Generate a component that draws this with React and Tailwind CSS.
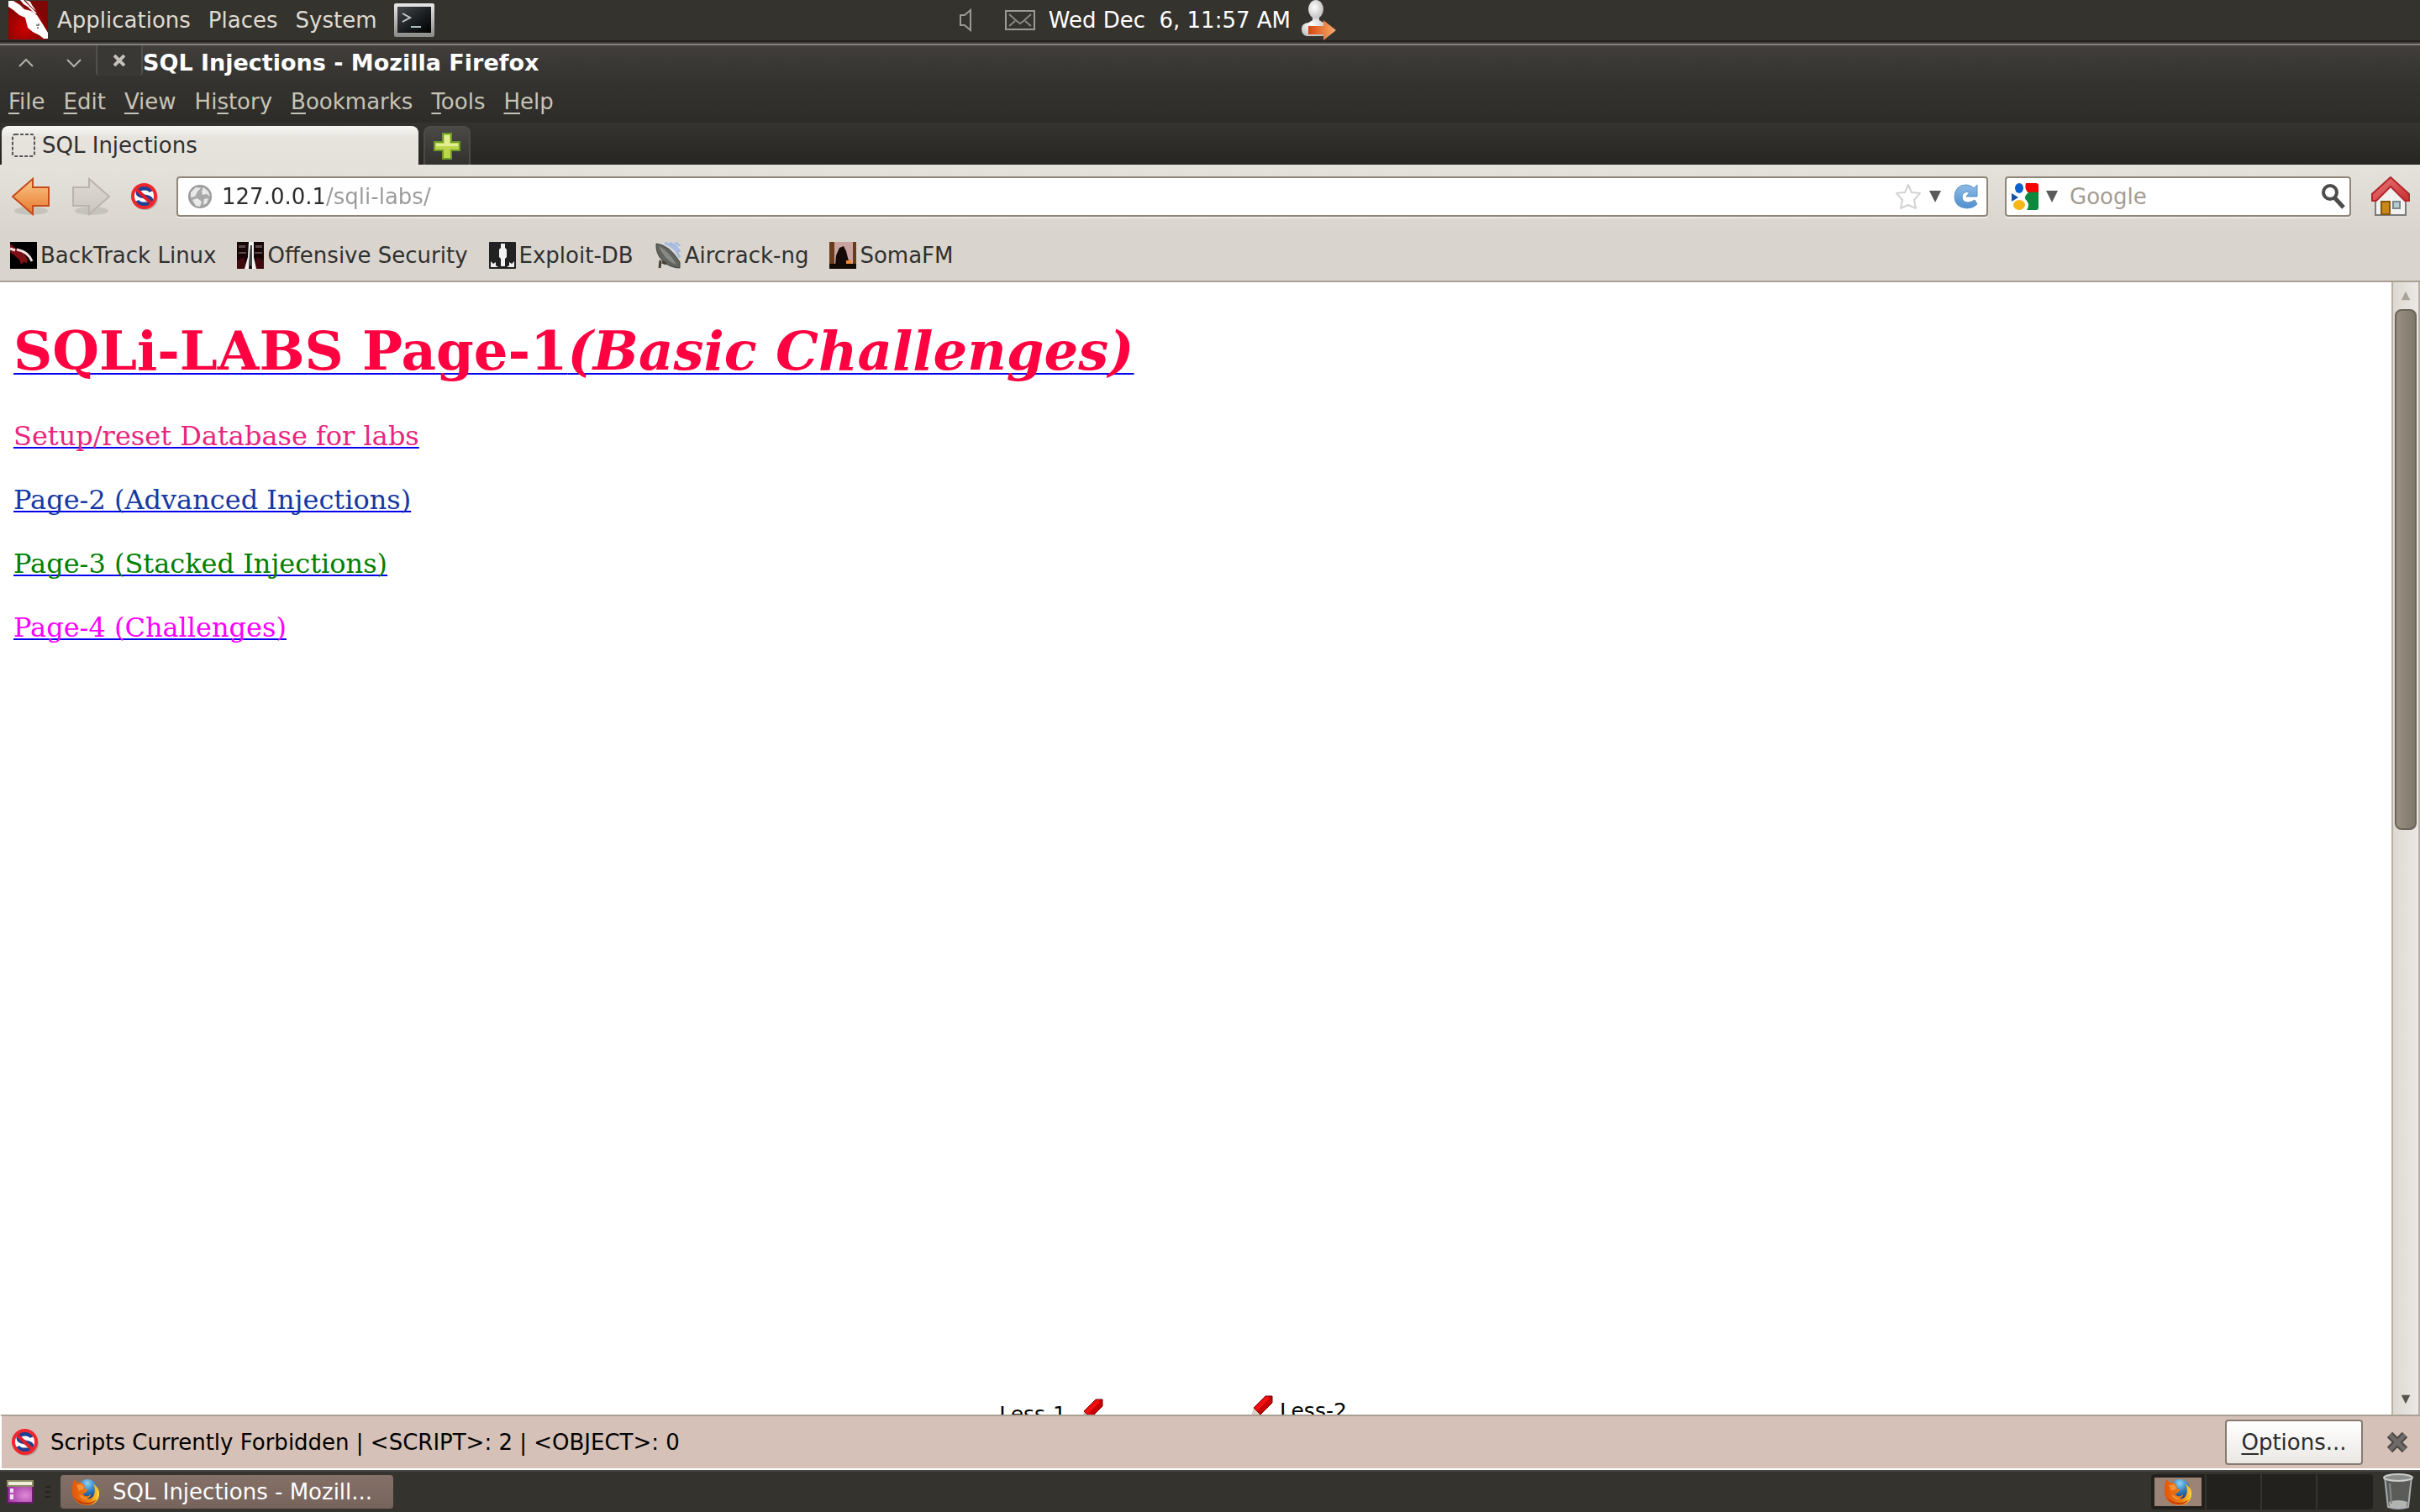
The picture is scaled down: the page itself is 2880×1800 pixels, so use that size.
import React from "react";

function DragonLogo() {
  return (
    <svg viewBox="0 0 48 48" className="h-12 w-12 shrink-0" aria-hidden="true">
      <defs>
        <radialGradient id="dragonRed" cx="0.4" cy="0.7" r="0.6">
          <stop offset="0" stopColor="#cc0000" />
          <stop offset="1" stopColor="#800505" />
        </radialGradient>
      </defs>
      <rect x="0" y="1" width="47" height="46" fill="url(#dragonRed)" />
      <path d="M0 1h6l8 5 5 5 8 2 7 5 7 11 6 10 0 7-5 0-5-4-8-4-6-5-2-8-1-4-7-3-7-6-6-4z" fill="#fff" />
      <path d="M14 0h4l5 5 11 11-3 0-8-8-5-3zM20 0l6 2 2 4 5 7-4-3z" fill="#fff" />
      <path d="M33 30h3M36 28v3M34 33h2" stroke="#888" strokeWidth="2" />
    </svg>
  );
}

function TerminalIcon() {
  return (
    <svg viewBox="0 0 48 40" className="h-10 w-12 shrink-0" aria-hidden="true">
      <defs>
        <linearGradient id="termBody" x1="0" y1="0" x2="1" y2="1">
          <stop offset="0" stopColor="#45494b" />
          <stop offset="0.55" stopColor="#1a1e20" />
          <stop offset="1" stopColor="#000" />
        </linearGradient>
        <linearGradient id="termRim" x1="0" y1="0" x2="0" y2="1">
          <stop offset="0" stopColor="#e8e8e8" />
          <stop offset="1" stopColor="#8a8a88" />
        </linearGradient>
      </defs>
      <rect x="0" y="0" width="48" height="40" rx="2" fill="url(#termRim)" />
      <rect x="4" y="4" width="40" height="31" fill="url(#termBody)" />
      <path d="M10 12l9 5-9 5" fill="none" stroke="#c5cbcc" strokeWidth="2" />
      <path d="M20 28h12" stroke="#aebfc6" strokeWidth="2" />
    </svg>
  );
}

function UserIcon() {
  return (
    <svg viewBox="0 0 44 48" className="h-12 w-11 shrink-0" aria-hidden="true">
      <defs>
        <radialGradient id="userHead" cx="0.4" cy="0.4" r="0.7">
          <stop offset="0" stopColor="#fff" />
          <stop offset="1" stopColor="#b9b9b9" />
        </radialGradient>
        <linearGradient id="userArrow" x1="0" x2="1">
          <stop offset="0" stopColor="#d8450d" />
          <stop offset="1" stopColor="#f8b070" />
        </linearGradient>
      </defs>
      <path d="M1 34q0-6 8-7l5-3v-4h8v4l5 3q4 1 4 7v5q0 4-5 4H7q-6-1-6-9z" fill="url(#userHead)" />
      <ellipse cx="18" cy="11" rx="9" ry="11" fill="url(#userHead)" />
      <path d="M9 31h18v-7l15 12-15 12v-7H9z" fill="url(#userArrow)" />
    </svg>
  );
}

function BlockedS({ className }) {
  return (
    <svg viewBox="0 0 32 32" className={className} aria-hidden="true">
      <ellipse cx="17" cy="18" rx="15" ry="14" fill="#000" opacity="0.18" />
      <circle cx="15.500" cy="15.500" r="13.500" fill="#fff" />
      <path d="M24 10q-2-4-8-4-8 0-8 5 0 4 8 5t8 5q0 4-8 4-7 0-9-4" fill="none" stroke="#1c4193" strokeWidth="5" />
      <path d="M6 7l19 18" stroke="#e11d2a" strokeWidth="4" />
      <circle cx="15.500" cy="15.500" r="13.500" fill="none" stroke="#f0272c" strokeWidth="4" />
    </svg>
  );
}

function FirefoxIcon() {
  return (
    <svg viewBox="0 0 32 32" className="h-8 w-8 shrink-0" aria-hidden="true">
      <defs>
        <radialGradient id="foxGlobe" cx="0.5" cy="0.2" r="0.8">
          <stop offset="0" stopColor="#8fd4f5" />
          <stop offset="0.5" stopColor="#2f7fc6" />
          <stop offset="1" stopColor="#123c7c" />
        </radialGradient>
        <linearGradient id="foxTail" x1="0" x2="1">
          <stop offset="0" stopColor="#e2560c" />
          <stop offset="0.65" stopColor="#ee8012" />
          <stop offset="1" stopColor="#ffd93b" />
        </linearGradient>
      </defs>
      <circle cx="18" cy="13" r="12" fill="url(#foxGlobe)" />
      <path d="M2 1l4 4 5 0 4 4-1 3 5 1-3 4-3 1q1 4 6 3l3-2q0 3-4 5 6 1 8-5t-1-13q8 6 7 14-2 12-15 12Q3 31 0 19V9z" fill="url(#foxTail)" />
      <path d="M5 8l6-1 3 3-1 3-5 2zM8 19q3 7 11 6" fill="#f9a24a" opacity="0.7" />
      <path d="M2 22q5 9 15 9 8 0 12-6-5 4-12 4Q8 28 2 22z" fill="#c33e08" />
    </svg>
  );
}

function NavArrow({ forward }) {
  const id = forward ? "navForward" : "navBack";
  return (
    <svg viewBox="0 0 46 48" className="h-12 w-[46px]" aria-hidden="true">
      <defs>
        <linearGradient id={id} x1="0" y1="0" x2="0" y2="1">
          <stop offset="0" stopColor={forward ? "#dedad5" : "#f9c98a"} />
          <stop offset="1" stopColor={forward ? "#cbc5bf" : "#e8772c"} />
        </linearGradient>
      </defs>
      <ellipse cx="23" cy="41" rx="20" ry="5" fill="#000" opacity="0.1" />
      <path
        d={forward ? "M1 13h19V3l24 21-24 21V35H1z" : "M44 13H25V3L1 24l24 21V35h19z"}
        fill={`url(#${id})`}
        stroke={forward ? "#bbb4ad" : "#c74a19"}
        strokeWidth="2"
      />
    </svg>
  );
}

function Globe() {
  return (
    <svg viewBox="0 0 28 28" className="h-7 w-7 shrink-0" aria-hidden="true">
      <circle cx="14" cy="14" r="13" fill="#a9a9a9" stroke="#9b9b9b" strokeWidth="2" />
      <path d="M3 9l6-6 6 1-4 4-3 6-5 1zM18 3l6 5 2 6-4-3-5 1-1-4zM5 18l6-2 5 4-2 6-5-1zM19 17l5-1-2 6-4 2z" fill="#e9e9e9" />
    </svg>
  );
}

function Star() {
  return (
    <svg viewBox="0 0 32 32" className="h-8 w-8" aria-hidden="true">
      <path d="M16 2l4 9 10 1-7 8 2 10-9-4-9 4 2-10-7-8 10-1z" fill="#fff" stroke="#d2d2d2" strokeWidth="2" strokeLinejoin="round" />
    </svg>
  );
}

function Triangle({ className = "h-4 w-4 text-[#5b5b5b]", up }) {
  return (
    <svg viewBox="0 0 16 16" className={className} aria-hidden="true">
      <path d={up ? "M1 15h14L8 1z" : "M1 1h14L8 15z"} fill="currentColor" />
    </svg>
  );
}

function Reload() {
  return (
    <svg viewBox="0 0 30 32" className="h-8 w-[30px]" aria-hidden="true">
      <defs>
        <linearGradient id="reloadBlue" x1="0" y1="0" x2="0" y2="1">
          <stop offset="0" stopColor="#8fbbe6" />
          <stop offset="1" stopColor="#4f8fce" />
        </linearGradient>
      </defs>
      <path d="M28 2v14H15l4-5q-8-2-9 5 0 7 7 7 4 0 8-3l3 5q-5 5-12 5Q1 29 1 16 2 2 15 2q5 0 9 4z" fill="url(#reloadBlue)" stroke="#5a93cb" />
    </svg>
  );
}

function GoogleIcon() {
  return (
    <svg viewBox="0 0 32 32" className="h-8 w-8" aria-hidden="true">
      <path d="M17 0h12q3 0 3 3v8H19q-4-5-2-11z" fill="#f80000" />
      <path d="M20 11q5-1 12 0v18q0 3-3 3H18q4-6 0-11-5-4 2-10z" fill="#08893e" />
      <ellipse cx="9" cy="6" rx="5" ry="6" fill="#0b62cf" />
      <path d="M0 12l8 5-8 5z" fill="#1b4fa8" />
      <ellipse cx="9" cy="26" rx="7" ry="6" fill="#f5b616" />
    </svg>
  );
}

function SearchIcon() {
  return (
    <svg viewBox="0 0 30 30" className="h-[30px] w-[30px]" aria-hidden="true">
      <circle cx="11" cy="10" r="8" fill="none" stroke="#4c4c4c" strokeWidth="4" />
      <path d="M16 16l11 12" stroke="#4c4c4c" strokeWidth="5" />
    </svg>
  );
}

function HomeIcon() {
  return (
    <svg viewBox="0 0 46 48" className="h-12 w-[46px]" aria-hidden="true">
      <defs>
        <linearGradient id="roof" x1="0" y1="0" x2="1" y2="1">
          <stop offset="0" stopColor="#ea7a78" />
          <stop offset="1" stopColor="#c72f33" />
        </linearGradient>
      </defs>
      <path d="M5 22L23 7l18 15v24H5z" fill="#f1f1f0" stroke="#7b7b7b" strokeWidth="2" />
      <path d="M23 1l22 20v8h-5L23 12 6 29H1v-8z" fill="url(#roof)" stroke="#b3282c" strokeWidth="2" />
      <path d="M12 30h10v15H12z" fill="#c98718" stroke="#875809" strokeWidth="2" />
      <path d="M26 30h8v8h-8z" fill="#b5cdd2" stroke="#7d8788" strokeWidth="2" />
    </svg>
  );
}

function BackTrackIcon() {
  return (
    <svg viewBox="0 0 32 32" className="h-8 w-8" aria-hidden="true">
      <rect width="32" height="32" fill="#000" />
      <path d="M0 2l6 5 4 2 6 4 5 8-1 4-4-1-3 3-2-6-5-4-6-5z" fill="#7d1015" />
      <path d="M0 8l6 2M8 9q14 3 18 14" fill="none" stroke="#f1dfe0" strokeWidth="3" />
    </svg>
  );
}

function OffSecIcon() {
  return (
    <svg viewBox="0 0 32 32" className="h-8 w-8" aria-hidden="true">
      <rect width="32" height="32" fill="#180506" />
      <path d="M2 4h8v3H2zM22 4h8v3h-8zM2 12h9v2H2zM21 12h9v2h-9z" fill="#5b4a4a" />
      <path d="M0 22l8-4 4 14H0zM32 22l-8-4-4 14h12z" fill="#3f0b0e" />
      <path d="M14 0h6v18l3 14h-5l-1-12h-2l-1 12H9l4-14z" fill="#f4f4f4" />
      <path d="M16 4h2v24h-4l1-14z" fill="#444" />
    </svg>
  );
}

function ExploitIcon() {
  return (
    <svg viewBox="0 0 32 32" className="h-8 w-8" aria-hidden="true">
      <rect width="32" height="32" rx="1" fill="#222" />
      <path d="M14 2h5v5l2 2v9l-2 2v9h-5v-9l-2-2V9l2-2z" fill="#f2f2f2" />
      <path d="M2 23l3 3 3-2v4l3 2H2zM30 23l-3 3-3-2v4l-3 2h9z" fill="#eee" />
    </svg>
  );
}

function AircrackIcon() {
  return (
    <svg viewBox="0 0 32 32" className="h-8 w-8" aria-hidden="true">
      <path d="M9 1h21v21Q24 8 9 1z" fill="#dfe3ec" />
      <path d="M12 1q14 5 18 18M18 1q9 4 12 11M24 1q4 1 6 4" fill="none" stroke="#a6badf" strokeWidth="3" />
      <path d="M2 2q16 2 28 22v7q-11 0-20-8Q1 14 2 2z" fill="#62655f" stroke="#3f413c" />
      <path d="M5 5q12 6 21 22-13-4-21-22z" fill="#878a83" />
      <path d="M7 22l-1 9M9 24l5 2" stroke="#464035" strokeWidth="3" />
    </svg>
  );
}

function SomaIcon() {
  return (
    <svg viewBox="0 0 32 32" className="h-8 w-8" aria-hidden="true">
      <rect width="32" height="32" fill="#c9a3a0" />
      <path d="M0 0h6v32H0zM28 0h4v32h-4z" fill="#6b3c1c" />
      <path d="M8 16l4-9 5-2 3 6 2 8 3 9H7z" fill="#150a08" />
      <path d="M0 26h32v6H0z" fill="#120a06" />
      <path d="M20 22h6v4h-6z" fill="#f08b2c" />
    </svg>
  );
}

function DesktopIcon() {
  return (
    <svg viewBox="0 0 32 28" className="h-7 w-8" aria-hidden="true">
      <defs>
        <radialGradient id="deskPurple" cx="0.7" cy="0.6" r="0.7">
          <stop offset="0" stopColor="#dd8bd6" />
          <stop offset="1" stopColor="#a336a6" />
        </radialGradient>
      </defs>
      <rect x="1" y="5" width="30" height="22" rx="1" fill="url(#deskPurple)" stroke="#6a1a6d" strokeWidth="2" />
      <rect x="0" y="0" width="32" height="8" fill="#8c8a62" />
      <rect x="2" y="2" width="28" height="4" fill="#efeedd" />
      <path d="M6 10v5M6 17v6" stroke="#ece1ee" strokeWidth="4" />
    </svg>
  );
}

function TrashIcon() {
  return (
    <svg viewBox="0 0 36 44" className="h-11 w-9" aria-hidden="true">
      <path d="M2 4h32l-4 36q-12 4-24 0z" fill="#5b5b59" stroke="#a9adb0" strokeWidth="2" />
      <path d="M7 34q11-4 22 0l-1 6q-10 3-20 0z" fill="#b0b4b2" />
      <ellipse cx="18" cy="5" rx="17" ry="4" fill="#8b8e8b" stroke="#c9cdcb" strokeWidth="2" />
      <path d="M8 12l2 24" stroke="#85898a" strokeWidth="2" />
    </svg>
  );
}

function Pencil() {
  return (
    <svg viewBox="0 0 28 28" className="h-7 w-7" aria-hidden="true">
      <path d="M19 1h8v8L13 23l-8-8z" fill="#c80000" />
      <path d="M19 1h4v4L9 19l-4-4z" fill="#f01010" />
      <path d="M5 15l8 8-12 4z" fill="#d9d2c8" />
      <path d="M19 1h8v8L13 23l-8-8z" fill="none" stroke="#7d0000" />
    </svg>
  );
}

const bookmarks = [
  ["BackTrack Linux", BackTrackIcon],
  ["Offensive Security", OffSecIcon],
  ["Exploit-DB", ExploitIcon],
  ["Aircrack-ng", AircrackIcon],
  ["SomaFM", SomaIcon],
];

const menus = [
  ["", "F", "ile"],
  ["", "E", "dit"],
  ["", "V", "iew"],
  ["Hi", "s", "tory"],
  ["", "B", "ookmarks"],
  ["", "T", "ools"],
  ["", "H", "elp"],
];

const pages = [
  ["Setup/reset Database for labs", "text-[#e8267d]"],
  ["Page-2 (Advanced Injections)", "text-[#1439a3]"],
  ["Page-3 (Stacked Injections)", "text-[#008000]"],
  ["Page-4 (Challenges)", "text-[#ff00ff]"],
];

function TopPanel() {
  return (
    <header className="flex h-[50px] shrink-0 border-b-2 border-[#22211e] bg-[#34332e] text-[#dfdbd2]">
      <div className="flex w-5/9 items-center justify-between pr-2">
        <nav className="flex items-center gap-[21px] pl-[10px]">
          <div className="flex items-center gap-[10px]">
            <DragonLogo />
            <button>Applications</button>
          </div>
          <button>Places</button>
          <button>System</button>
          <button aria-label="Terminal"><TerminalIcon /></button>
        </nav>
        <div className="flex items-center text-white">
          <button aria-label="Volume" className="mr-10">
            <svg viewBox="0 0 14 28" className="h-7 w-[14px]" aria-hidden="true">
              <path d="M1 8h5l7-6v24l-7-6H1z" fill="none" stroke="#9c9a95" strokeWidth="2" />
            </svg>
          </button>
          <button aria-label="Mail" className="mr-4">
            <svg viewBox="0 0 36 24" className="h-6 w-9" aria-hidden="true">
              <rect x="1" y="1" width="34" height="22" fill="none" stroke="#9c9a95" strokeWidth="2" />
              <path d="M5 5l9 8 4 3 4-3 9-8M5 19l7-6M31 19l-7-6" fill="none" stroke="#8a8883" strokeWidth="2" />
            </svg>
          </button>
          <time className="mr-3 whitespace-pre">Wed Dec  6, 11:57 AM</time>
          <button aria-label="Session"><UserIcon /></button>
        </div>
      </div>
    </header>
  );
}

function TitleBar() {
  return (
    <div className="flex h-11 shrink-0 items-center border-t-2 border-[#85817e] bg-linear-to-b from-[#413e3b] to-[#34332f]">
      <button aria-label="Maximize" className="flex h-full w-[57px] items-center justify-center pl-1">
        <svg viewBox="0 0 18 12" className="h-3 w-[18px]" aria-hidden="true"><path d="M1 10l8-8 8 8" fill="none" stroke="#b5b2ab" strokeWidth="2" /></svg>
      </button>
      <button aria-label="Minimize" className="flex h-full w-[57px] items-center justify-center pl-1">
        <svg viewBox="0 0 18 12" className="h-3 w-[18px]" aria-hidden="true"><path d="M1 2l8 8 8-8" fill="none" stroke="#b5b2ab" strokeWidth="2" /></svg>
      </button>
      <button aria-label="Close" className="flex h-9 w-14 items-center justify-center self-start rounded-b border-x-2 border-[#53514e] bg-[#3a3835]">
        <svg viewBox="0 0 14 14" className="h-[14px] w-[14px]" aria-hidden="true"><path d="M1 1l12 12M13 1L1 13" stroke="#c4c1ba" strokeWidth="4" /></svg>
      </button>
      <h2 className="text-[27px] font-bold text-white">SQL Injections - Mozilla Firefox</h2>
    </div>
  );
}

export default function App() {
  return (
    <div className="flex h-screen w-full flex-col overflow-hidden bg-[#34332e] font-['DejaVu_Sans',sans-serif] text-[26px] leading-8">
      <TopPanel />
      <div className="h-[2px] shrink-0 bg-[#403e3b]" />
      <TitleBar />

      <nav className="flex h-[50px] shrink-0 items-center gap-[22px] bg-linear-to-b from-[#34332f] to-[#2d2c29] pl-[10px] text-[#c7c3b6]">
        {menus.map(([before, key, after]) => (
          <button key={key + after}>
            {before}<span className="underline decoration-2 underline-offset-4">{key}</span>{after}
          </button>
        ))}
      </nav>

      <div className="flex h-[50px] shrink-0 gap-[6px] bg-linear-to-b from-[#343330] to-[#272623] pt-1 pl-[2px]" role="tablist">
        <button role="tab" aria-selected="true" className="flex w-[496px] items-center gap-2 rounded-t-lg bg-linear-to-b from-[#f8f7f5] via-[#e7e4de] via-30% to-[#e4e1da] pl-3 text-[#303030]">
          <svg viewBox="0 0 28 28" className="h-7 w-7" aria-hidden="true">
            <rect x="1" y="1" width="26" height="26" rx="3" fill="none" stroke="#555" strokeWidth="2" strokeDasharray="4 2" />
          </svg>
          SQL Injections
        </button>
        <button aria-label="New tab" className="flex w-14 items-center justify-center rounded-t-lg border-x-2 border-t-2 border-[#4c4b48] bg-linear-to-b from-[#4a4946] to-[#32312e]">
          <svg viewBox="0 0 32 32" className="h-8 w-8" aria-hidden="true">
            <path d="M11 1h10v10h10v10H21v10H11V21H1V11h10z" fill="#bcd84a" stroke="#6f9a2c" strokeWidth="2" />
            <path d="M13 3h6v10h10v3H3v-3h10z" fill="#e1ee95" />
          </svg>
        </button>
      </div>

      <div className="flex h-[140px] shrink-0 flex-col border-b-2 border-[#aaa094] bg-linear-to-b from-[#e5e2dc] to-[#d9d4cd] to-60% pt-[14px] text-[#303030]">
        <div className="flex h-12 items-center pr-3 pl-[14px]">
          <button aria-label="Back" className="mr-[26px]"><NavArrow /></button>
          <button aria-label="Forward" className="mr-6"><NavArrow forward /></button>
          <button aria-label="Script blocker" className="mr-[22px]"><BlockedS className="h-8 w-8" /></button>
          <div className="flex h-12 flex-1 items-center rounded border-2 border-[#8f8678] bg-white pr-[9px] pl-3 shadow-[0_2px_0_#edebe7]">
            <Globe />
            <input
              aria-label="Address"
              defaultValue="127.0.0.1/sqli-labs/"
              className="ml-3 h-10 min-w-0 flex-1 bg-[linear-gradient(90deg,#2c2c2c_121px,#9a9a9a_121px)] bg-clip-text text-transparent outline-none"
            />
            <button aria-label="Bookmark page"><Star /></button>
            <button aria-label="History" className="mr-[14px] ml-2"><Triangle /></button>
            <button aria-label="Reload"><Reload /></button>
          </div>
          <div className="ml-5 flex h-12 w-[412px] items-center rounded border-2 border-[#8f8678] bg-white pr-1 pl-[6px] shadow-[0_2px_0_#edebe7]">
            <GoogleIcon />
            <button aria-label="Search engine" className="ml-2"><Triangle /></button>
            <input aria-label="Search" placeholder="Google" className="ml-[13px] h-10 min-w-0 flex-1 outline-none placeholder:text-[#a39c92]" />
            <button aria-label="Go"><SearchIcon /></button>
          </div>
          <button aria-label="Home" className="ml-6"><HomeIcon /></button>
        </div>
        <div className="flex flex-1 items-center gap-[25px] pt-4 pl-3">
          {bookmarks.map(([name, Icon]) => (
            <a key={name} href="#" className="flex items-center gap-1"><Icon />{name}</a>
          ))}
        </div>
      </div>

      <div className="flex min-h-0 flex-1 bg-white">
        <main className="flex min-w-0 flex-1 flex-col overflow-hidden pt-11 pl-4 font-['DejaVu_Serif',serif] text-[32px] leading-[38px]">
          <h1 className="text-[64px] leading-[76px] font-bold">
            <a href="#" className="text-[#ff0040] underline decoration-[#0000ee] decoration-2 underline-offset-4 [text-decoration-skip-ink:none]">
              SQLi-LABS Page-1<em>(Basic Challenges)</em>
            </a>
          </h1>
          <ul className="mt-11 flex flex-col gap-[38px]">
            {pages.map(([label, color]) => (
              <li key={label}>
                <a href="#" className={`underline decoration-[#0000ee] decoration-2 underline-offset-2 [text-decoration-skip-ink:none] ${color}`}>{label}</a>
              </li>
            ))}
          </ul>
          <div className="mt-auto flex h-6 items-start justify-center overflow-visible pr-[70px] font-['DejaVu_Sans',sans-serif] text-[25px] leading-7 text-black">
            <a href="#" className="mt-[10px] mr-4">Less-1</a>
            <span className="mt-[5px] mr-[174px]"><Pencil /></span>
            <span className="mt-[1px] mr-2"><Pencil /></span>
            <a href="#" className="mt-[6px]">Less-2</a>
          </div>
        </main>
        <div className="flex w-[34px] flex-col items-center border-x-2 border-[#b8b0a3] bg-linear-to-r from-[#dcd8d1] to-[#ece9e5]">
          <button aria-label="Scroll up" className="flex h-8 items-center"><Triangle up className="h-3 w-3 text-[#aaa397]" /></button>
          <div className="h-[46%] w-[26px] rounded-lg border-2 border-[#6b6459] bg-linear-to-r from-[#9a9184] to-[#7f776a]" />
          <button aria-label="Scroll down" className="mt-auto flex h-9 items-center"><Triangle className="h-3 w-3 text-[#55514b]" /></button>
        </div>
      </div>

      <div className="flex h-[66px] shrink-0 items-center border-y-2 border-l-2 border-t-[#aaa094] border-b-white border-l-white bg-[#d5c1b7] pr-[14px] pl-3 text-black">
        <BlockedS className="h-8 w-8" />
        <p className="ml-[14px]">Scripts Currently Forbidden | &lt;SCRIPT&gt;: 2 | &lt;OBJECT&gt;: 0</p>
        <button className="ml-auto h-[54px] w-[164px] rounded border-2 border-[#857b70] bg-linear-to-b from-white to-[#ebe8e4] text-[#2c2c2c]">
          <span className="underline decoration-2 underline-offset-4">O</span>ptions...
        </button>
        <button aria-label="Dismiss" className="ml-7">
          <svg viewBox="0 0 26 26" className="h-[26px] w-[26px]" aria-hidden="true">
            <path d="M4 4l18 18M22 4L4 22" stroke="#4a4744" strokeWidth="9" />
            <path d="M4 4l18 18M22 4L4 22" stroke="#6d6a67" strokeWidth="5" />
          </svg>
        </button>
      </div>

      <footer className="flex h-[50px] shrink-0 items-center border-t-2 border-[#45443f] bg-[#34332e] pr-2 pl-2">
        <button aria-label="Show desktop"><DesktopIcon /></button>
        <div className="mr-3 ml-[14px] flex flex-col gap-1" aria-hidden="true">
          <i className="h-[2px] w-[6px] bg-[#22211e]" />
          <i className="h-[2px] w-[6px] bg-[#22211e]" />
          <i className="h-[2px] w-[6px] bg-[#22211e]" />
        </div>
        <button className="flex h-10 w-[396px] items-center gap-4 rounded-sm bg-linear-to-b from-[#857067] to-[#76645c] pl-[14px] text-white">
          <FirefoxIcon />SQL Injections - Mozill...
        </button>
        <div className="ml-auto flex h-[42px] divide-x-2 divide-[#34332e] rounded bg-[#22211e]">
          <button aria-label="Workspace 1" className="flex w-[66px] items-center p-1">
            <span className="flex h-[34px] flex-1 items-center justify-center bg-[#9b8376]"><FirefoxIcon /></span>
          </button>
          <button aria-label="Workspace 2" className="w-[66px]" />
          <button aria-label="Workspace 3" className="w-[66px]" />
          <button aria-label="Workspace 4" className="w-[66px]" />
        </div>
        <button aria-label="Trash" className="ml-3"><TrashIcon /></button>
      </footer>
    </div>
  );
}
